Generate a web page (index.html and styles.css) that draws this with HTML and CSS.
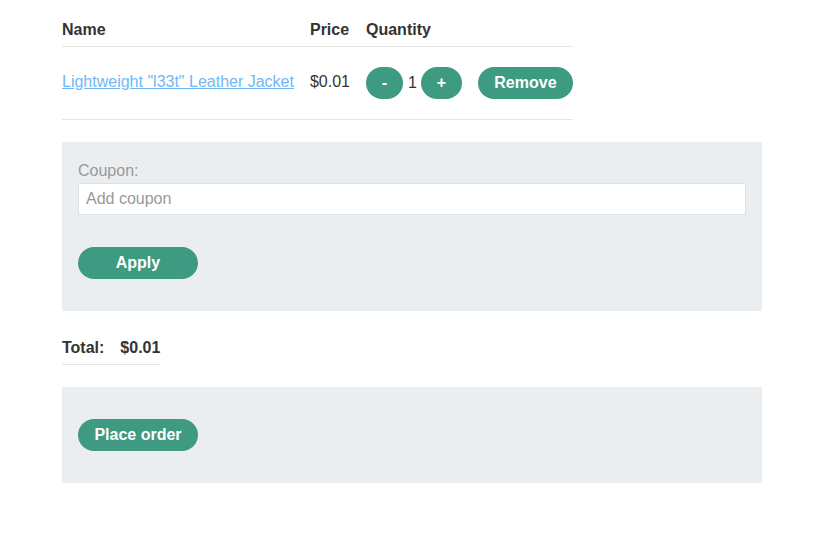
FILE: index.html
```html
<!DOCTYPE html>
<html>
<head>
<meta charset="utf-8">
<link rel="stylesheet" href="styles.css">
</head>
<body>
<div class="page">
  <table class="cart">
    <thead>
      <tr><th>Name</th><th>Price</th><th>Quantity</th><th></th></tr>
    </thead>
    <tbody>
      <tr>
        <td class="name"><a href="#">Lightweight "l33t" Leather Jacket</a></td>
        <td class="price">$0.01</td>
        <td class="qty"><button class="btn small minus">-</button><span class="num">1</span><button class="btn small plus">+</button></td>
        <td><button class="btn remove">Remove</button></td>
      </tr>
    </tbody>
  </table>

  <div class="panel coupon">
    <label class="label">Coupon:</label>
    <input class="input" type="text" placeholder="Add coupon">
    <button class="btn wide">Apply</button>
  </div>

  <table class="total">
    <tr><th>Total:</th><th>$0.01</th></tr>
  </table>

  <div class="panel order">
    <button class="btn wide">Place order</button>
  </div>
</div>
</body>
</html>
```
FILE: styles.css
```css
* { box-sizing: border-box; }
body {
  margin: 0;
  font-family: "Liberation Sans", Arial, sans-serif;
  font-size: 16px;
  color: #333332;
  background: #fff;
}
.page {
  width: 700px;
  margin: 0 0 0 62px;
  padding-top: 13px;
}
table {
  border-collapse: collapse;
}
.cart th, .cart td, .total th {
  text-align: left;
  padding: 0 16px 0 0;
  border-bottom: 1px solid #e6e6e6;
  vertical-align: middle;
}
.cart th:last-child, .cart td:last-child, .total th:last-child { padding-right: 0; }
.cart th { height: 33px; padding-top: 2px; font-weight: bold; }
.cart td { height: 73px; }
.cart td.name, .cart td.price { padding-bottom: 1px; }
.cart a { color: #70b8f5; }
.qty { white-space: nowrap; }
.num { display: inline-block; margin: 0 4px 0 5px; vertical-align: middle; }
.btn {
  font-family: "Liberation Sans", Arial, sans-serif;
  font-size: 16px;
  font-weight: bold;
  color: #fff;
  background: #3e9a80;
  border: 0;
  border-radius: 25px;
  height: 32px;
  padding: 0 16px;
  vertical-align: middle;
  cursor: pointer;
}
.btn.minus { width: 37px; padding: 0; }
.btn.plus { width: 41px; padding: 0; }
.btn.remove { width: 95px; padding: 0; }
.btn.wide { width: 120px; padding: 0; display: block; }
.panel {
  background: #ebeef1;
  padding: 16px;
}
.coupon {
  margin-top: 22px;
  padding-top: 19px;
  padding-bottom: 32px;
}
.label {
  display: block;
  color: #999;
  line-height: 19px;
  margin-bottom: 3px;
}
.input {
  display: block;
  width: 100%;
  height: 32px;
  border: 1px solid #e1e1e1;
  background: #fff;
  font-family: "Liberation Sans", Arial, sans-serif;
  font-size: 16px;
  padding: 0 7px;
  margin-bottom: 32px;
}
.input::placeholder { color: #999; }
.total { margin-top: 28px; }
.total th { height: 25px; padding-bottom: 7px; font-weight: bold; vertical-align: top; }
.order {
  margin-top: 22px;
  padding-top: 32px;
  padding-bottom: 32px;
}
```
